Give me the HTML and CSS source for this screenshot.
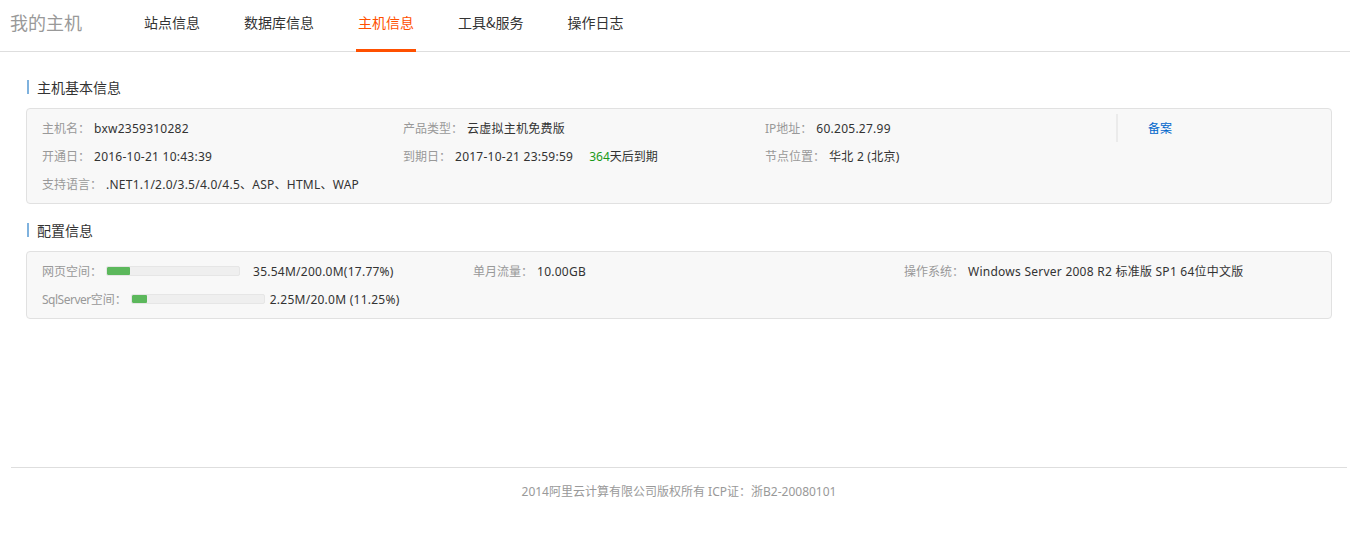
FILE: index.html
```html
<!DOCTYPE html>
<html lang="zh-CN">
<head>
<meta charset="utf-8">
<title>我的主机</title>
<link rel="stylesheet" href="styles.css">
</head>
<body>
<header class="header">
  <div class="brand">我的主机</div>
  <nav class="nav">
    <a class="nav-item">站点信息</a>
    <a class="nav-item">数据库信息</a>
    <a class="nav-item active">主机信息</a>
    <a class="nav-item">工具&amp;服务</a>
    <a class="nav-item">操作日志</a>
  </nav>
</header>

<main class="main">
  <h2 class="section-title first">主机基本信息</h2>
  <div class="card basic">
    <div class="cell"><span class="label">主机名：</span><span class="value">bxw2359310282</span></div>
    <div class="cell"><span class="label">产品类型：</span><span class="value">云虚拟主机免费版</span></div>
    <div class="cell"><span class="label">IP地址：</span><span class="value">60.205.27.99</span></div>
    <div class="cell action"><a class="link">备案</a></div>

    <div class="cell"><span class="label">开通日：</span><span class="value">2016-10-21 10:43:39</span></div>
    <div class="cell"><span class="label">到期日：</span><span class="value">2017-10-21 23:59:59</span><span class="remain"><span class="days">364</span>天后到期</span></div>
    <div class="cell"><span class="label">节点位置：</span><span class="value">华北 2 (北京)</span></div>
    <div class="cell"></div>

    <div class="cell wide"><span class="label">支持语言：</span><span class="value">.NET1.1/2.0/3.5/4.0/4.5、ASP、HTML、WAP</span></div>
  </div>

  <h2 class="section-title">配置信息</h2>
  <div class="card config">
    <div class="cell"><span class="label">网页空间：</span><span class="bar"><span class="fill" style="width:17.77%"></span></span><span class="value usage-a">35.54M/200.0M(17.77%)</span></div>
    <div class="cell"><span class="label">单月流量：</span><span class="value">10.00GB</span></div>
    <div class="cell"><span class="label">操作系统：</span><span class="value">Windows Server 2008 R2 标准版 SP1 64位中文版</span></div>

    <div class="cell"><span class="label"><span class="latin-tight">SqlServer</span>空间：</span><span class="bar"><span class="fill" style="width:11.25%"></span></span><span class="value usage-b">2.25M/20.0M (11.25%)</span></div>
    <div class="cell"></div>
    <div class="cell"></div>
  </div>
</main>

<footer class="footer">
  <p class="copyright">2014阿里云计算有限公司版权所有 ICP证：浙B2-20080101</p>
</footer>
</body>
</html>
```

FILE: styles.css
```css
* { box-sizing: border-box; }

html, body {
  margin: 0;
  padding: 0;
  background: #fff;
}

body {
  font-family: "Noto Sans", "Noto Sans CJK SC", sans-serif;
  font-size: 12px;
  color: #333;
}

.header {
  display: flex;
  align-items: flex-start;
  height: 52px;
  padding-left: 10px;
  border-bottom: 1px solid #dedede;
}

.brand {
  font-family: "Noto Sans CJK SC", sans-serif;
  font-size: 18px;
  line-height: 44px;
  color: #999;
}

.nav {
  display: flex;
  gap: 40px;
  margin-left: 60px;
}

.nav-item {
  display: block;
  height: 52px;
  padding: 0 2px;
  font-family: "Noto Sans CJK SC", sans-serif;
  font-size: 14px;
  line-height: 44px;
  color: #333;
  border-bottom: 3px solid transparent;
}

.nav-item.active {
  color: #ff5000;
  border-bottom-color: #ff5000;
}

.main {
  padding: 0 18px 0 26px;
}

.section-title {
  margin: 19px 0 0 1px;
  padding-left: 8px;
  border-left: 2px solid #7fb2de;
  font-family: "Noto Sans CJK SC", sans-serif;
  font-size: 14px;
  font-weight: normal;
  line-height: 14px;
  height: 14px;
  color: #333;
}

.section-title.first {
  margin-top: 28px;
}

.card {
  margin-top: 14px;
  padding: 5px 15px;
  background: #f8f8f8;
  border: 1px solid #e1e1e1;
  border-radius: 4px;
  display: grid;
}

.basic {
  grid-template-columns: 361px 362px 351px 1fr;
}

.config {
  grid-template-columns: 431px 431px 1fr;
}

.cell {
  display: flex;
  align-items: center;
  height: 28px;
  white-space: nowrap;
}

.cell.wide {
  grid-column: 1 / -1;
}

.cell.action {
  border-left: 2px solid #ebebeb;
  padding-left: 30px;
}

.label {
  color: #999;
}

.latin-tight {
  letter-spacing: -0.5px;
}

.value {
  margin-left: 4px;
  color: #333;
  letter-spacing: 0.25px;
}

.remain {
  margin-left: 16px;
  color: #333;
}

.days {
  color: #1a9a1a;
}

.link {
  color: #0066cc;
  cursor: pointer;
}

.bar {
  display: inline-block;
  width: 134px;
  height: 10px;
  margin-left: 4px;
  background: #efefef;
  border: 1px solid #e6e6e6;
  border-radius: 2px;
  overflow: hidden;
}

.fill {
  display: block;
  height: 100%;
  background: #5cb85c;
  border-radius: 1px;
}

.usage-a { margin-left: 13px; }
.usage-b { margin-left: 5px; }

.footer {
  margin: 148px 3px 0 11px;
  border-top: 1px solid #dedede;
}

.copyright {
  margin: 0;
  padding-top: 16px;
  text-align: center;
  font-size: 12px;
  line-height: 16px;
  color: #999;
}
```
